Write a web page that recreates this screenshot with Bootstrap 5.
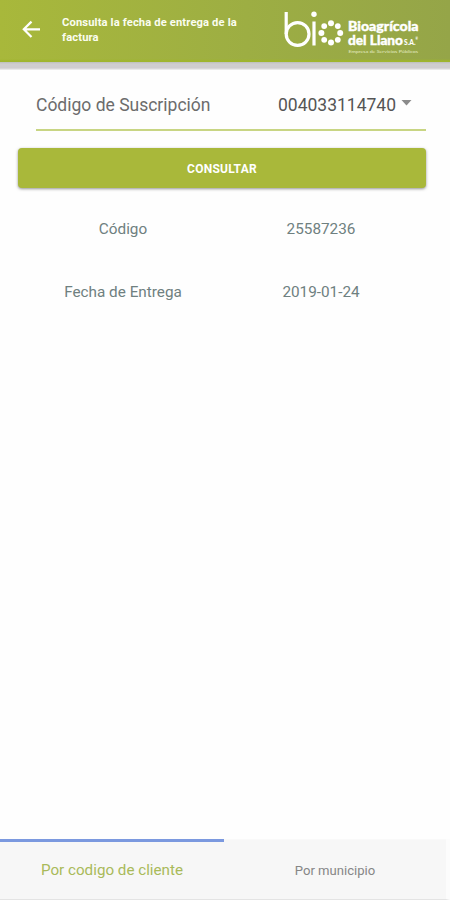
<!DOCTYPE html>
<html lang="es">
<head>
<meta charset="utf-8">
<meta name="viewport" content="width=device-width, initial-scale=1">
<title>Fecha de entrega de la factura</title>
<link href="https://cdn.jsdelivr.net/npm/bootstrap@5.3.0/dist/css/bootstrap.min.css" rel="stylesheet">
<style>
body{font-family:Roboto,"Liberation Sans",sans-serif;background:#fefefe;height:900px;overflow:hidden}
.app-header{height:62px;flex:none;background:linear-gradient(180deg,transparent 59px,#9fb52d 61px),linear-gradient(90deg,#a8b83b 0,#9dae43 55%,#95a548 100%)}
.header-strip{height:8px;flex:none;background:linear-gradient(#bdbfb9,#cfcdcf 2px,#cfcdcf 6px,#f3f3f3)}
.back-btn{margin-left:21px;width:20px;height:20px;line-height:0}
.app-title{margin-left:21px;padding-top:15px;width:190px;font-size:11.2px;letter-spacing:.13px;line-height:15px;font-weight:700;color:#fbfdf0}
.logo{margin-left:30px}
.field{margin:22px 24px 0 36px;height:39px;border-bottom:2px solid #c8d583;font-size:17.5px;line-height:26px}
.field-label{color:#6c6c6c}
.field-select{color:#555;margin-right:14px}
.caret{margin-left:5px;margin-top:8px}
.btn-query{margin:17px 24px 0 18px;height:40px;padding:2px 0 0;border:0;border-radius:4px;background:#a9b83a;color:#fff;font-size:12px;letter-spacing:.25px;font-weight:700;box-shadow:0 1px 3px rgba(60,60,60,.55)}
.btn-query:hover{background:#a0b035;color:#fff}
.result{padding:10px 29px 0 24px;font-size:15.3px;color:#6f8080}
.result-row{height:63px}
.result-row>div{width:198px}
.tabs{height:61px;flex:none;background:#f7f7f7;border-bottom:1px solid #e4e4e4;border-right:4px solid #fcfcfc}
.tab-item{width:224px;border-top:1px solid #f9f9f9;color:#868686;font-size:13.1px;text-decoration:none}
.tab-item.active{border-top:3px solid #7b99df;color:#a9ba5a;font-size:15.2px}
.tab-item:last-child{width:222px;padding-top:2px}
</style>
<script src="https://cdn.jsdelivr.net/npm/bootstrap@5.3.0/dist/js/bootstrap.bundle.min.js"></script>
</head>
<body class="d-flex flex-column">
<header class="app-header d-flex">
  <a href="#" class="back-btn mt-3 pt-1" aria-label="Atrás"><svg width="20" height="20" viewBox="0 0 20 20" fill="none" stroke="#fff" stroke-width="2.2"><path d="M19 9.3H3M10.5 1.6L2.8 9.3l7.7 7.7"/></svg></a>
  <div class="app-title">Consulta la fecha de entrega de la factura</div>
  <svg class="logo" width="140" height="60" viewBox="282 0 140 60" fill="#fff" role="img" aria-label="Bioagrícola del Llano">
    <g fill="none" stroke="#fff" stroke-width="3.2"><path d="M286.2 12v22"/><circle cx="297.6" cy="34" r="11.4"/><path d="M314 21.5v24"/></g>
    <circle cx="314" cy="14.2" r="2.7"/>
    <g><circle cx="331" cy="23.2" r="3"/><circle cx="337.8" cy="26.1" r="2.9"/><circle cx="340.2" cy="33" r="3"/><circle cx="337.8" cy="39.8" r="2.9"/><circle cx="331" cy="42.6" r="3"/><circle cx="324.2" cy="39.8" r="2.9"/><circle cx="321.4" cy="33" r="3"/><circle cx="324.2" cy="26.1" r="2.9"/></g>
    <g font-family="Lato, sans-serif" font-weight="900" stroke="#fff" stroke-width=".35">
      <text x="348" y="31.2" font-size="12.2" textLength="70.5" lengthAdjust="spacingAndGlyphs">Bioagrícola</text>
      <text x="348" y="45.4" font-size="12.2" textLength="55" lengthAdjust="spacingAndGlyphs">del Llano</text>
      <text x="404" y="45.4" font-size="6.5" stroke="none" textLength="11.5" lengthAdjust="spacingAndGlyphs">S.A.</text>
      <text x="415.5" y="40" font-size="3" stroke="none">®</text>
    </g>
    <text x="348.5" y="52.7" font-family="Lato, sans-serif" font-size="4.5" fill="#e3ebc3" textLength="69.5" lengthAdjust="spacingAndGlyphs">Empresa de Servicios Públicos</text>
  </svg>
</header>
<div class="header-strip"></div>
<main class="flex-grow-1 d-flex flex-column">
  <div class="field d-flex justify-content-between">
    <span class="field-label">Código de Suscripción</span>
    <span class="field-select d-flex">004033114740<svg class="caret" width="11" height="6" viewBox="0 0 11 6" fill="#8b8b8b"><path d="M.5 0h10l-5 5.5z"/></svg></span>
  </div>
  <button type="button" class="btn btn-query">CONSULTAR</button>
  <section class="result">
    <div class="result-row d-flex align-items-center text-center"><div>Código</div><div>25587236</div></div>
    <div class="result-row d-flex align-items-center text-center"><div>Fecha de Entrega</div><div>2019-01-24</div></div>
  </section>
</main>
<nav class="tabs d-flex">
  <a href="#" class="tab-item active d-flex align-items-center justify-content-center">Por codigo de cliente</a>
  <a href="#" class="tab-item d-flex align-items-center justify-content-center">Por municipio</a>
</nav>
</body>
</html>
